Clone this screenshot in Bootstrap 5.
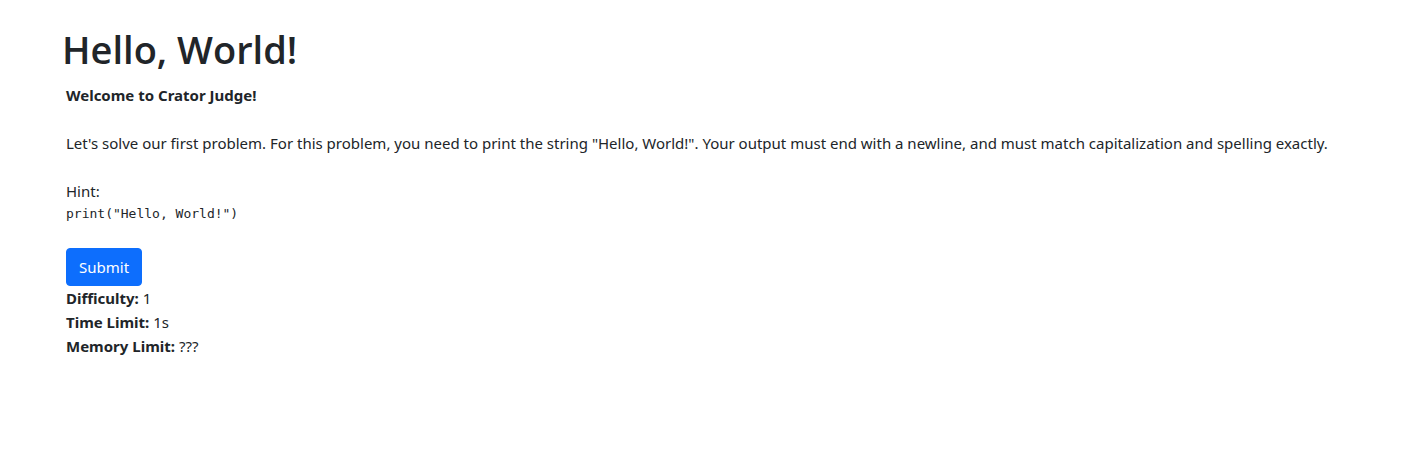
<!DOCTYPE html>
<html lang="en">
<head>
<meta charset="utf-8">
<meta name="viewport" content="width=device-width, initial-scale=1">
<title>Hello, World! - Crator Judge</title>
<link href="https://cdn.jsdelivr.net/npm/bootstrap@5.3.0/dist/css/bootstrap.min.css" rel="stylesheet">
<style>
body { font-family: "Segoe UI", "Noto Sans", sans-serif; font-size: 15px; line-height: 24px; }
.problem { padding: 25px 62px; }
.problem h1 { font-family: "Segoe UI", "Open Sans", sans-serif; font-size: 38px; line-height: 48px; font-weight: 600; }
.problem-body { padding: 2px 4px; }
.problem-body pre { font-family: Consolas, "DejaVu Sans Mono", monospace; font-size: 13px; line-height: 21px; }
.problem-body .btn { --bs-btn-border-radius: 4px; --bs-btn-font-size: 15px; --bs-btn-line-height: 24px; }
</style>
</head>
<body>
<main class="problem">
<h1 class="mb-2">Hello, World!</h1>
<div class="problem-body">
<p class="mb-4"><strong>Welcome to Crator Judge!</strong></p>
<p class="mb-4">Let's solve our first problem. For this problem, you need to print the string "Hello, World!". Your output must end with a newline, and must match capitalization and spelling exactly.</p>
<p class="mb-0">Hint:</p>
<pre class="mb-4">print("Hello, World!")</pre>
<button type="button" class="btn btn-primary">Submit</button>
<div><strong>Difficulty:</strong> 1</div>
<div><strong>Time Limit:</strong> 1s</div>
<div><strong>Memory Limit:</strong> ???</div>
</div>
</main>
<script src="https://cdn.jsdelivr.net/npm/bootstrap@5.3.0/dist/js/bootstrap.bundle.min.js"></script>
</body>
</html>
